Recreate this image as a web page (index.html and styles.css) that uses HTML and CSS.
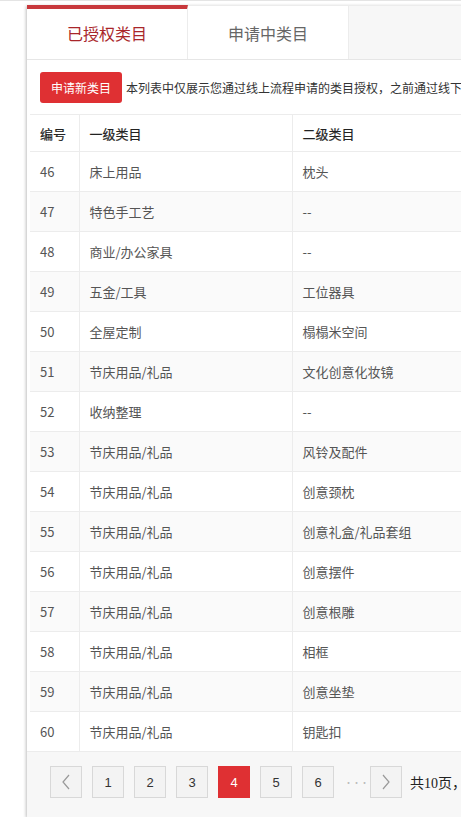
FILE: index.html
```html
<!DOCTYPE html>
<html lang="zh-CN">
<head>
<meta charset="utf-8">
<title>类目授权</title>
<link rel="stylesheet" href="styles.css">
</head>
<body>
<div class="topline"></div>
<div class="card">
  <div class="tabs">
    <div class="tab active">已授权类目</div>
    <div class="tab">申请中类目</div>
    <div class="tab-rest"></div>
  </div>
  <div class="notice">
    <button class="btn-apply">申请新类目</button>
    <span class="notice-text">本列表中仅展示您通过线上流程申请的类目授权，之前通过线下流程申请的类目授权请联系您的对接人员查询</span>
  </div>
  <table class="grid">
    <colgroup>
      <col class="c1"><col class="c2"><col class="c3"><col class="c4">
    </colgroup>
    <thead>
      <tr><th>编号</th><th>一级类目</th><th>二级类目</th><th>授权状态</th></tr>
    </thead>
    <tbody>
      <tr><td>46</td><td>床上用品</td><td>枕头</td><td>已授权</td></tr>
      <tr><td>47</td><td>特色手工艺</td><td>--</td><td>已授权</td></tr>
      <tr><td>48</td><td>商业/办公家具</td><td>--</td><td>已授权</td></tr>
      <tr><td>49</td><td>五金/工具</td><td>工位器具</td><td>已授权</td></tr>
      <tr><td>50</td><td>全屋定制</td><td>榻榻米空间</td><td>已授权</td></tr>
      <tr><td>51</td><td>节庆用品/礼品</td><td>文化创意化妆镜</td><td>已授权</td></tr>
      <tr><td>52</td><td>收纳整理</td><td>--</td><td>已授权</td></tr>
      <tr><td>53</td><td>节庆用品/礼品</td><td>风铃及配件</td><td>已授权</td></tr>
      <tr><td>54</td><td>节庆用品/礼品</td><td>创意颈枕</td><td>已授权</td></tr>
      <tr><td>55</td><td>节庆用品/礼品</td><td>创意礼盒/礼品套组</td><td>已授权</td></tr>
      <tr><td>56</td><td>节庆用品/礼品</td><td>创意摆件</td><td>已授权</td></tr>
      <tr><td>57</td><td>节庆用品/礼品</td><td>创意根雕</td><td>已授权</td></tr>
      <tr><td>58</td><td>节庆用品/礼品</td><td>相框</td><td>已授权</td></tr>
      <tr><td>59</td><td>节庆用品/礼品</td><td>创意坐垫</td><td>已授权</td></tr>
      <tr><td>60</td><td>节庆用品/礼品</td><td>钥匙扣</td><td>已授权</td></tr>
    </tbody>
  </table>
  <div class="pager">
    <a class="pg arrow"><svg width="10" height="16" viewBox="0 0 10 16"><polyline points="8,1 2,8 8,15" fill="none" stroke="#999" stroke-width="1.2"/></svg></a>
    <a class="pg">1</a>
    <a class="pg">2</a>
    <a class="pg">3</a>
    <a class="pg current">4</a>
    <a class="pg">5</a>
    <a class="pg">6</a>
    <span class="dots">···</span>
    <a class="pg arrow"><svg width="10" height="16" viewBox="0 0 10 16"><polyline points="2,1 8,8 2,15" fill="none" stroke="#999" stroke-width="1.2"/></svg></a>
    <span class="total">共10页，共150条</span>
  </div>
</div>
</body>
</html>
```
FILE: styles.css
```css
html, body {
  margin: 0;
  padding: 0;
  overflow: hidden;
  background: #fff;
}
body {
  font-family: "Noto Sans CJK SC", "Microsoft YaHei", sans-serif;
  color: #333;
  width: 461px;
}
.topline {
  height: 1px;
  background: #e4e4e4;
  width: 461px;
}
.card {
  margin: 4px 0 0 27px;
  width: 760px;
  background: #fff;
  box-shadow: -1px 1px 3px rgba(0, 0, 0, 0.25);
}
.tabs {
  display: flex;
  height: 55px;
  border-bottom: 1px solid #e6e6e6;
  box-sizing: border-box;
}
.tab {
  width: 161px;
  display: flex;
  align-items: center;
  justify-content: center;
  font-size: 16px;
  color: #666;
  background: #fff;
  box-sizing: border-box;
  border-top: 1px solid #ececec;
  border-right: 1px solid #ececec;
}
.tab.active {
  border-top: 4px solid #c8383c;
  color: #a9262a;
  padding-bottom: 2px;
}
.tab-rest {
  flex: 1;
  background: #f7f7f7;
  border-top: 1px solid #ececec;
}
.notice {
  height: 54px;
  display: flex;
  align-items: center;
  gap: 4px;
  padding-left: 13px;
  white-space: nowrap;
  box-sizing: border-box;
}
.btn-apply {
  width: 82px;
  height: 31px;
  border: none;
  border-radius: 3px;
  background: #df3033;
  color: #fff;
  font-family: inherit;
  font-size: 12px;
  padding: 0;
}
.notice-text {
  font-size: 12px;
  color: #333;
}
.grid {
  margin-left: 3px;
  width: 730px;
  border-collapse: collapse;
  table-layout: fixed;
  font-size: 13px;
}
.c1 { width: 49px; }
.c2 { width: 213px; }
.c3 { width: 230px; }
.grid th, .grid td {
  height: 39px;
  padding: 0 10px;
  text-align: left;
  border-top: 1px solid #ececec;
  border-left: 1px solid #ececec;
  white-space: nowrap;
}
.grid th:first-child, .grid td:first-child {
  border-left: none;
}
.grid th {
  height: 36px;
  font-weight: normal;
  color: #222;
  -webkit-text-stroke: 0.2px #222;
}
.grid td {
  color: #555;
}
.grid tbody tr:nth-child(even) td {
  background: #fafafa;
}
.pager {
  display: flex;
  align-items: center;
  gap: 10px;
  background: #f7f7f7;
  border-top: 1px solid #ececec;
  padding: 14px 0 19px 23px;
  height: 32px;
}
.pg {
  width: 32px;
  height: 32px;
  box-sizing: border-box;
  border: 1px solid #d8d8d8;
  background: #f3f3f3;
  display: flex;
  align-items: center;
  justify-content: center;
  font-size: 13px;
  color: #333;
  font-family: "Liberation Sans", Arial, sans-serif;
}
.pg.current {
  background: #df3033;
  border-color: #df3033;
  color: #fff;
}
.dots {
  width: 16px;
  text-align: center;
  color: #bbb;
  font-size: 9px;
  letter-spacing: -1px;
}
.total {
  font-family: "Liberation Serif", "Noto Sans CJK SC", serif;
  font-size: 14px;
  color: #222;
  margin-left: -2px;
  white-space: nowrap;
}
```
